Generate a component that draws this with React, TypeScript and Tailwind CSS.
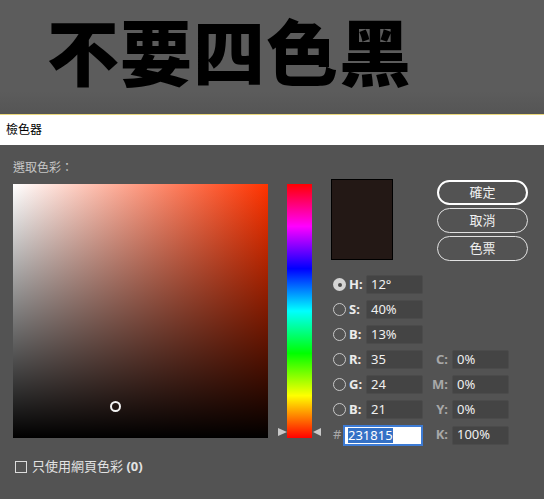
import React from 'react'

// ── Field rows ────────────────────────────────────────────────────────────────

const HSB_RGB = [
  { label: 'H:', value: '12°', checked: true },
  { label: 'S:', value: '40%' },
  { label: 'B:', value: '13%' },
  { label: 'R:', value: '35', cmyk: { label: 'C:', value: '0%' } },
  { label: 'G:', value: '24', cmyk: { label: 'M:', value: '0%' } },
  { label: 'B:', value: '21', cmyk: { label: 'Y:', value: '0%' } },
]

const font = "font-['Noto_Sans','Noto_Sans_CJK_TC',sans-serif]"

function Radio({ checked }: { checked?: boolean }) {
  if (checked) {
    return (
      <span className="flex h-[13px] w-[13px] shrink-0 items-center justify-center rounded-full bg-[#d4d4d4]">
        <span className="h-[4px] w-[4px] rounded-full bg-[#4a4a4a]" />
      </span>
    )
  }
  return <span className="block h-[13px] w-[13px] shrink-0 rounded-full border-[1.5px] border-[#c8c8c8]" />
}

function Field({ value }: { value: string }) {
  return (
    <div className="flex h-[19px] w-[57px] items-center rounded-[2px] border border-[#4b4b4b] bg-[#444444] pl-[4px] text-[13px] text-[#f0f0f0]">
      {value}
    </div>
  )
}

function PillButton({ children, primary }: { children: React.ReactNode; primary?: boolean }) {
  return (
    <button
      type="button"
      className={`flex h-[25px] w-[91px] items-center justify-center rounded-full text-[13px] text-[#f0f0f0] ${
        primary ? 'border-2 border-white' : 'border-[1.5px] border-[#e2e2e2]'
      }`}
    >
      {children}
    </button>
  )
}

export default function App() {
  return (
    <div className={`h-[499px] w-[544px] overflow-hidden bg-[#535353] ${font}`}>
      {/* Banner */}
      <div className="h-[114px] bg-[linear-gradient(to_bottom,#5c5c5c_80%,#555555)] pl-[47px] pt-[12px]">
        <h1 className="text-[72px] leading-[80px] font-black tracking-[1px] text-black">不要四色黑</h1>
      </div>
      <div className="h-px bg-[#ead77a]" />

      {/* Dialog title */}
      <div className="flex h-[30px] items-center bg-white pl-[6px] text-[12px] text-black">檢色器</div>

      {/* Dialog body */}
      <div className="px-[13px] pt-[16px]">
        <p className="text-[12px] leading-[14px] text-[#c6c6c6]">選取色彩：</p>

        <div className="mt-[4px] flex">
          {/* Saturation / brightness field */}
          <div className="relative mt-[5px] h-[254px] w-[255px] bg-[linear-gradient(to_top,#000,transparent),linear-gradient(to_right,#fff,#ff3300)]">
            <span className="absolute left-[97px] top-[217px] h-[11px] w-[11px] rounded-full border-2 border-[#f2f2f2]" />
          </div>

          {/* Hue slider */}
          <div className="relative ml-[10px] mt-[5px] w-[43px]">
            <div className="ml-[9px] h-[254px] w-[25px] bg-[linear-gradient(to_bottom,#f00,#f0f,#00f,#0ff,#0f0,#ff0,#f00)]" />
            <svg className="absolute left-0 top-[243px]" width="9" height="10" viewBox="0 0 9 10">
              <polygon points="0,1 9,5 0,9" fill="#c9c9c9" />
            </svg>
            <svg className="absolute left-[35px] top-[243px]" width="8" height="10" viewBox="0 0 8 10">
              <polygon points="8,1 0,5 8,9" fill="#c9c9c9" />
            </svg>
          </div>

          {/* Swatch, buttons and values */}
          <div className="ml-[10px] flex flex-col">
            <div className="flex">
              <div className="h-[81px] w-[62px] border border-black bg-[#231815]" />
              <div className="ml-[44px] mt-px flex flex-col gap-[3px]">
                <PillButton primary>確定</PillButton>
                <PillButton>取消</PillButton>
                <PillButton>色票</PillButton>
              </div>
            </div>

            <div className="mt-[14px] flex flex-col gap-[6px]">
              {HSB_RGB.map(({ label, value, checked, cmyk }, i) => (
                <div key={i} className="flex h-[19px] items-center">
                  <span className="ml-[2px] flex">
                    <Radio checked={checked} />
                  </span>
                  <span className="ml-[3px] w-[17px] text-[13px] font-bold text-[#ececec]">{label}</span>
                  <Field value={value} />
                  {cmyk && (
                    <>
                      <span className="w-[29px] pr-[4px] text-right text-[13px] font-bold text-[#a8a8a8]">
                        {cmyk.label}
                      </span>
                      <Field value={cmyk.value} />
                    </>
                  )}
                </div>
              ))}

              <div className="flex h-[20px] items-center">
                <span className="ml-[2px] w-[10px] text-[13px] text-[#a8a8a8]">#</span>
                <div className="flex h-[21px] w-[80px] items-center border-2 border-[#3d7bd4] bg-white pl-[3px] text-[13px] leading-[15px]">
                  <span className="bg-[#3471c6] text-white">231815</span>
                </div>
                <span className="w-[29px] pr-[4px] text-right text-[13px] font-bold text-[#a8a8a8]">K:</span>
                <Field value="100%" />
              </div>
            </div>
          </div>
        </div>

        {/* Web colors only */}
        <div className="mt-[12px] flex items-center gap-[5px] pl-[2px]">
          <span className="h-[12px] w-[12px] border border-[#dcdcdc]" />
          <span className="text-[13px] text-[#e2e2e2]">
            只使用網頁色彩 <span className="font-bold">(0)</span>
          </span>
        </div>
      </div>
    </div>
  )
}
